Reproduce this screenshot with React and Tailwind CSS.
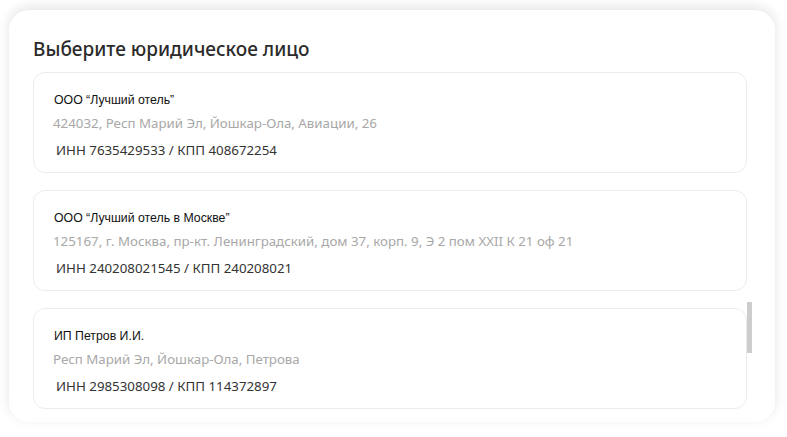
import React from "react";

const entities = [
	{
		name: "ООО “Лучший отель”",
		address: "424032, Респ Марий Эл, Йошкар-Ола, Авиации, 26",
		inn: "7635429533",
		kpp: "408672254",
	},
	{
		name: "ООО “Лучший отель в Москве”",
		address:
			"125167, г. Москва, пр-кт. Ленинградский, дом 37, корп. 9, Э 2 пом XXII К 21 оф 21",
		inn: "240208021545",
		kpp: "240208021",
	},
	{
		name: "ИП Петров И.И.",
		address: "Респ Марий Эл, Йошкар-Ола, Петрова",
		inn: "2985308098",
		kpp: "114372897",
	},
];

const EntityCard = ({ entity }) => (
	<div className="h-[101px] rounded-xl border border-[#ececec] bg-white pl-5 pt-[19px]">
		<p className="font-['Liberation_Sans',Arial,sans-serif] text-[12.3px] leading-4 text-[#111]">
			{entity.name}
		</p>
		<p className="mt-[5px] -ml-px text-[13.3px] leading-5 text-[#a8a8a8]">
			{entity.address}
		</p>
		<p className="mt-[7px] ml-0.5 text-[13.3px] leading-5 text-[#333]">
			ИНН {entity.inn} / КПП {entity.kpp}
		</p>
	</div>
);

export default function App() {
	return (
		<div className="h-[437px] w-[787px] overflow-hidden bg-white pl-[9px] pt-[10px] font-['Noto_Sans',sans-serif]">
			<div className="relative h-[412px] w-[766px] rounded-[20px] bg-white pl-6 pr-7 shadow-[0_-3px_12px_rgba(0,0,0,0.11)]">
				<h2 className="pt-[27px] text-[19px] leading-6 font-medium text-[#2b2b2b]">
					Выберите юридическое лицо
				</h2>
				<div className="mt-[11px] flex flex-col gap-[17px]">
					{entities.map((e) => (
						<EntityCard key={e.inn} entity={e} />
					))}
				</div>
				{/* scrollbar thumb */}
				<div className="absolute left-[738px] top-[292px] h-[51px] w-[5px] bg-[#cdcdcd]" />
			</div>
		</div>
	);
}
